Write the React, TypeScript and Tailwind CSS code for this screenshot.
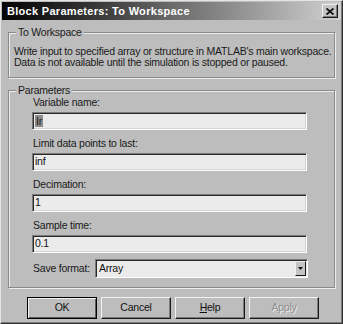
const font = { fontFamily: '"Liberation Sans", Arial, sans-serif' };

const Field = ({ label, value, selected }: { label: string; value: string; selected?: boolean }) => (
  <div className="flex flex-col">
    <span className="h-[13px] pl-[24px] leading-[13px] text-[#1a1a1a]">{label}</span>
    <div className="ml-[23px] mr-[27px] mt-[3px] flex h-[18px] items-center border border-t-[#7a7a7a] border-l-[#7a7a7a] border-b-white border-r-white bg-[#ebebeb] pl-[2px] text-[#111] shadow-[inset_1px_1px_0_#2a2a2a,inset_-1px_-1px_0_#d4d4d4]">
      {selected ? <span className="bg-[#8c8c8c] px-[1px] leading-[12px] text-[#1a1a1a]">{value}</span> : value}
    </div>
  </div>
);

const Button = ({ children, primary, disabled }: { children: React.ReactNode; primary?: boolean; disabled?: boolean }) => (
  <div
    className={
      'flex h-[22px] w-[70px] items-center justify-center ' +
      (primary
        ? 'border border-black shadow-[inset_1px_1px_0_#f2f2f2,inset_-1px_-1px_0_#5a5a5a]'
        : 'border border-t-[#f2f2f2] border-l-[#f2f2f2] border-b-[#1a1a1a] border-r-[#1a1a1a] shadow-[inset_-1px_-1px_0_#7a7a7a]') +
      (disabled ? ' text-[#8d8d8d] [text-shadow:1px_1px_0_#f0f0f0]' : ' text-[#111]')
    }
  >
    {children}
  </div>
);

export default function App() {
  return (
    <div
      style={font}
      className="flex h-[324px] w-[343px] flex-col border border-t-[#e4e4e4] border-l-[#e4e4e4] border-b-[#303030] border-r-[#303030] bg-[#bdbdbd] text-[10.5px] tracking-[-0.22px] shadow-[inset_-1px_-1px_0_#7c7c7c]"
    >
      <div className="mx-[1px] mt-[1px] flex h-[18px] items-center justify-between bg-gradient-to-r from-[#050505] via-[#6a6a6a] to-[#d2d2d2] pl-[5px] pr-[3px]">
        <span className="text-[11px] font-bold tracking-[0.3px] text-white">Block Parameters: To Workspace</span>
        <div className="flex h-[14px] w-[16px] items-center justify-center border border-t-[#f0f0f0] border-l-[#f0f0f0] border-b-[#1a1a1a] border-r-[#1a1a1a] bg-[#c4c4c4] shadow-[inset_-1px_-1px_0_#7a7a7a]">
          <svg width="8" height="7" viewBox="0 0 8 7">
            <path d="M0.5 0.5 L7.5 6.5 M7.5 0.5 L0.5 6.5" stroke="#111" strokeWidth="1.8" />
          </svg>
        </div>
      </div>

      <div className="flex flex-col px-[7px]">
        <div className="relative mt-[12px] h-[46px] border border-[#8a8a8a] shadow-[inset_1px_1px_0_#ececec,1px_1px_0_#ececec]">
          <span className="absolute -top-[7px] left-[7px] bg-[#bdbdbd] px-[2px] leading-[13px] text-[#1a1a1a]">To Workspace</span>
          <div className="pl-[5px] pt-[13px] leading-[11px] text-[#1a1a1a]">
            <div className="whitespace-nowrap">Write input to specified array or structure in MATLAB's main workspace.</div>
            <div className="whitespace-nowrap">Data is not available until the simulation is stopped or paused.</div>
          </div>
        </div>

        <div className="relative mt-[12px] flex h-[198px] flex-col border border-[#8a8a8a] pt-[5px] shadow-[inset_1px_1px_0_#ececec,1px_1px_0_#ececec]">
          <span className="absolute -top-[7px] left-[7px] bg-[#bdbdbd] px-[2px] leading-[13px] text-[#1a1a1a]">Parameters</span>
          <div className="flex flex-col gap-[7px]">
            <Field label="Variable name:" value="Ir" selected />
            <Field label="Limit data points to last:" value="inf" />
            <Field label="Decimation:" value="1" />
            <Field label="Sample time:" value="0.1" />
          </div>
          <div className="mt-[6px] flex items-center">
            <span className="w-[86px] shrink-0 whitespace-nowrap pl-[24px] text-[#1a1a1a]">Save format:</span>
            <div className="mr-[26px] flex h-[19px] flex-1 items-center justify-between border border-t-[#7a7a7a] border-l-[#7a7a7a] border-b-white border-r-white bg-[#ebebeb] pl-[3px] pr-[1px] text-[#111] shadow-[inset_1px_1px_0_#2a2a2a]">
              <span>Array</span>
              <div className="flex h-[15px] w-[11px] items-center justify-center border border-t-[#f0f0f0] border-l-[#f0f0f0] border-b-[#1a1a1a] border-r-[#1a1a1a] bg-[#c4c4c4]">
                <svg width="5" height="3" viewBox="0 0 5 3">
                  <path d="M0 0 H5 L2.5 3 Z" fill="#111" />
                </svg>
              </div>
            </div>
          </div>
        </div>
      </div>

      <div className="mt-[9px] flex gap-[4px] pl-[26px]">
        <Button primary>OK</Button>
        <Button>Cancel</Button>
        <Button>
          <span>
            <span className="underline">H</span>elp
          </span>
        </Button>
        <Button disabled>Apply</Button>
      </div>
    </div>
  );
}
